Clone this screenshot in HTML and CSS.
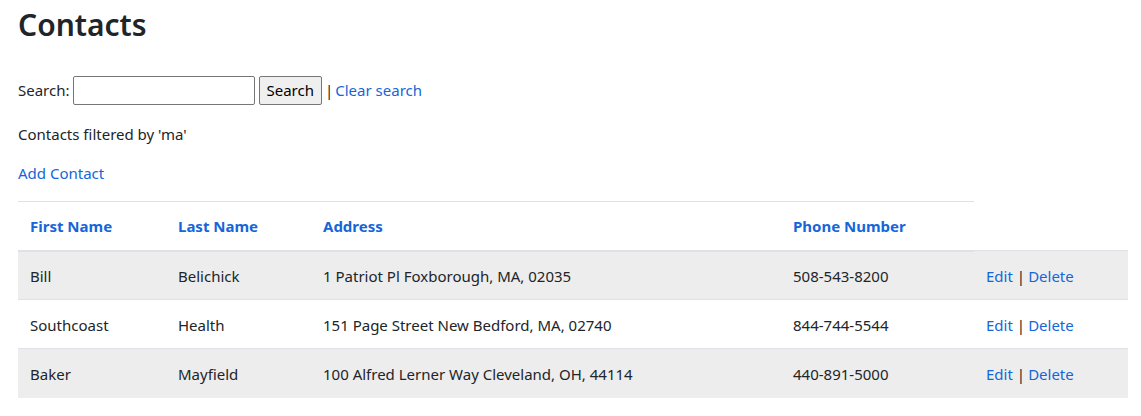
FILE: index.html
```html
<!DOCTYPE html>
<html>
<head>
<meta charset="utf-8">
<link rel="stylesheet" href="styles.css">
</head>
<body>
<main class="container">
  <h1 class="title">Contacts</h1>
  <form class="search">
    <label for="q">Search:</label>
    <input id="q" type="text" class="search-input">
    <button type="button" class="search-btn">Search</button>
    <span class="sep">|</span>
    <a href="#" class="link">Clear search</a>
  </form>
  <p class="note">Contacts filtered by 'ma'</p>
  <p class="note add"><a href="#" class="link">Add Contact</a></p>
  <table class="contacts">
    <thead>
      <tr>
        <th class="c1"><a href="#">First Name</a></th>
        <th class="c2"><a href="#">Last Name</a></th>
        <th class="c3"><a href="#">Address</a></th>
        <th class="c4"><a href="#">Phone Number</a></th>
      </tr>
    </thead>
    <tbody>
      <tr class="odd">
        <td>Bill</td><td>Belichick</td><td>1 Patriot Pl Foxborough, MA, 02035</td><td>508-543-8200</td>
        <td><a href="#" class="link">Edit</a><span class="bar">|</span><a href="#" class="link">Delete</a></td>
      </tr>
      <tr>
        <td>Southcoast</td><td>Health</td><td>151 Page Street New Bedford, MA, 02740</td><td>844-744-5544</td>
        <td><a href="#" class="link">Edit</a><span class="bar">|</span><a href="#" class="link">Delete</a></td>
      </tr>
      <tr class="odd">
        <td>Baker</td><td>Mayfield</td><td>100 Alfred Lerner Way Cleveland, OH, 44114</td><td>440-891-5000</td>
        <td><a href="#" class="link">Edit</a><span class="bar">|</span><a href="#" class="link">Delete</a></td>
      </tr>
    </tbody>
  </table>
</main>
</body>
</html>
```
FILE: styles.css
```css
html, body {
  margin: 0;
  padding: 0;
  background: #fff;
}
body {
  font-family: "Noto Sans", "Open Sans", sans-serif;
  font-size: 15px;
  color: #212529;
}
.container {
  padding: 0 13px 0 18px;
}
.title {
  margin: 0;
  padding-top: 5px;
  font-size: 30px;
  font-weight: 600;
  line-height: 40px;
  color: #212529;
}
.search {
  margin-top: 30px;
  display: flex;
  align-items: center;
  height: 30px;
}
.search label {
  margin-right: 4px;
}
.search-input {
  width: 182px;
  height: 29px;
  box-sizing: border-box;
  border: 1px solid #767676;
  border-radius: 2px;
  margin: 0 4px 0 -1px;
  padding: 1px 2px;
}
.search-btn {
  height: 29px;
  box-sizing: border-box;
  border: 1px solid #767676;
  border-radius: 2px;
  background: #efefef;
  font-family: inherit;
  font-size: 15px;
  color: #000;
  padding: 0 7px;
  margin: 0 3px 0 0;
}
.sep {
  margin-right: 2px;
}
.link, .contacts th a {
  color: #1466d9;
  text-decoration: none;
}
.note {
  margin: 18px 0 0;
  line-height: 22px;
}
.note.add {
  margin-top: 17px;
}
.contacts {
  margin-top: 17px;
  width: 1110px;
  border-collapse: collapse;
}
.contacts th {
  text-align: left;
  font-weight: 700;
  border-top: 1px solid #dee2e6;
  border-bottom: 2px solid #dee2e6;
  padding: 12px;
  height: 49px;
  box-sizing: border-box;
}
.contacts td {
  padding: 13px 12px 11px;
  border-top: 1px solid #dee2e6;
  height: 49px;
  box-sizing: border-box;
}
.contacts .c1 { width: 148px; }
.contacts .c2 { width: 145px; }
.contacts .c3 { width: 470px; }
.contacts .c4 { width: 193px; }
.contacts tr.odd td {
  background: #ededed;
}
.bar {
  margin: 0 3px 0 4px;
}
```
